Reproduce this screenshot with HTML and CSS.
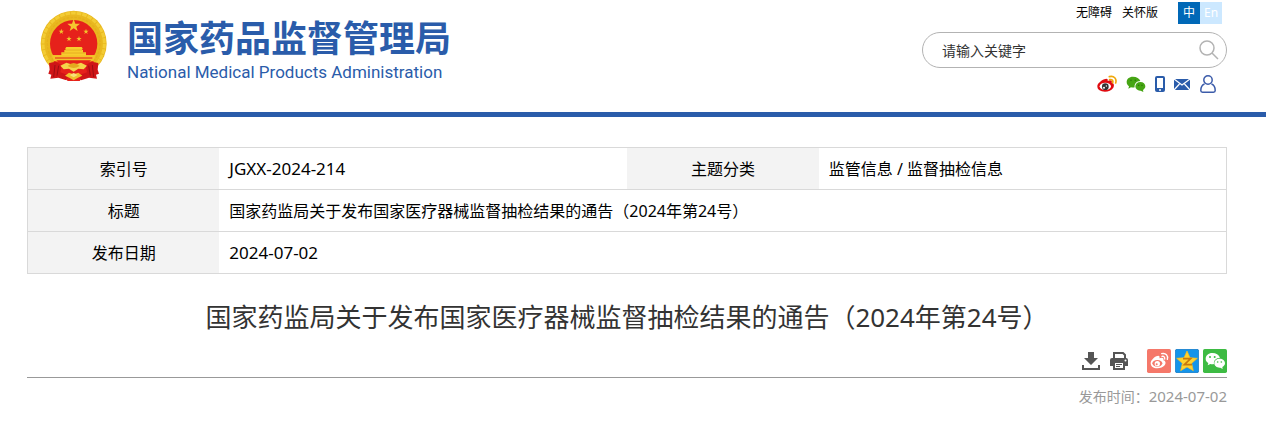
FILE: index.html
```html
<!DOCTYPE html>
<html lang="zh-CN">
<head>
	<meta charset="UTF-8">
	<meta name="viewport" content="width=device-width, initial-scale=1.0">
	<title>国家药监局关于发布国家医疗器械监督抽检结果的通告（2024年第24号）</title>
	<link rel="stylesheet" href="styles.css">
</head>
<body>
	<header class="header">
		<a class="logo" href="#">
			<svg class="emblem" viewBox="27 28 201 214" aria-hidden="true">
				<circle cx="128" cy="128" r="99" fill="#e9b81f"/>
				<circle cx="128" cy="128" r="92" fill="none" stroke="#f3cc35" stroke-width="9" stroke-dasharray="14 3"/>
				<circle cx="128" cy="128" r="79" fill="none" stroke="#e5b01c" stroke-width="4" stroke-dasharray="8 4"/>
				<circle cx="128" cy="128" r="71" fill="#e6211b"/>
				<path d="M128 54l5 14h14l-11 9 4 13-12-8-12 8 4-13-11-9h14z" fill="#f5c72e"/>
				<path id="star" d="M91 83l2 6h6l-5 4 2 6-5-4-5 4 2-6-5-4h6z" fill="#f2c52c"/>
				<use href="#star" x="74"/>
				<use href="#star" x="23" y="22"/>
				<use href="#star" x="53" y="22"/>
				<path d="M103 142l3-4h46l3 4-2 5h3v7h9v9h25l-6 16H72l-6-16h25v-9h9v-7h4z" fill="#f8cd2d"/>
				<path d="M103 147h50M93 156h71" stroke="#e0a01c" stroke-width="2"/>
				<path d="M62 163h132l-8 19H70z" fill="#f3c42a"/>
				<path d="M72 171h112" stroke="#e6211b" stroke-width="3"/>
				<path d="M76 178h104l-14 14H90z" fill="#e6211b"/>
				<path d="M68 180l24 4 36-4 36 4 24-4-8 28-22 18-12 14h-36l-12-14-22-18z" fill="#e6211b"/>
				<path d="M54 186l20-4 18 10-4 22 24 9-6 15-24-8-24 3 3-12-9-3 4-12zM202 186l-20-4-18 10 4 22-24 9 6 15 24-8 24 3-3-12 9-3-4-12z" fill="#cf1517"/>
				<path d="M72 192l-4 36M83 194l-5 30M184 192l4 36M173 194l5 30" stroke="#9c0e12" stroke-width="3"/>
				<path d="M88 194l18-9 22 7 22-7 18 9-10 11-16-2-14 9-14-9-16 2z" fill="#f5d44a"/>
				<path d="M110 195q18-18 36 0-18 12-36 0z" fill="#e4a91e"/>
				<path d="M102 224l12-9 14 5 14-5 12 9-13 6-13 8-13-8z" fill="#f0c22e"/>
				<path d="M116 222l12-6 12 6-12 7z" fill="#f9e27a"/>
			</svg>
			<span class="logo-text">
				<span class="logo-cn">国家药品监督管理局</span>
				<span class="logo-en">National Medical Products Administration</span>
			</span>
		</a>
		<div class="header-right">
			<nav class="top-links">
				<a href="#">无障碍</a>
				<a href="#">关怀版</a>
				<div class="lang">
					<a class="active" href="#">中</a>
					<a href="#">En</a>
				</div>
			</nav>
			<form class="search">
				<input type="text" placeholder="请输入关键字" aria-label="请输入关键字">
				<button type="submit" aria-label="搜索">
					<svg width="20" height="20" viewBox="0 0 20 20" fill="none" stroke="#b3b3b3" stroke-width="1.500">
						<circle cx="8" cy="8" r="7"/>
						<path d="M13 13l6 6"/>
					</svg>
				</button>
			</form>
			<div class="social">
				<a href="#" aria-label="微博">
					<svg width="20" height="18" viewBox="0 0 60 54">
						<path d="M22 13c7-4 12-1 10 5 8-4 15-2 12 5 8 2 8 9 5 15-5 8-15 12-25 12C11 50 1 45 1 34c0-7 10-17 21-21z" fill="#e00b10"/>
						<ellipse cx="25" cy="34" rx="17" ry="11" fill="#fff"/>
						<circle cx="25" cy="35" r="10" fill="#333"/>
						<circle cx="21" cy="38" r="3" fill="#fff"/>
						<circle cx="28" cy="33" r="2" fill="#fff"/>
						<path d="M37 5c14-4 23 6 19 19M38 14c7-2 11 3 9 9" fill="none" stroke="#f0a80c" stroke-width="5" stroke-linecap="round"/>
					</svg>
				</a>
				<a href="#" aria-label="微信">
					<svg width="20" height="18" viewBox="0 0 60 54">
						<path d="M21 5C9 5 2 12 2 21c0 6 3 10 7 13l-2 7 8-4c4 1 8 1 11 0-2-10 6-19 17-19C40 10 32 5 21 5z" fill="#46a514"/>
						<path d="M43 21c-9 0-15 6-15 13 0 8 7 14 16 13l8 4-1-6c4-3 7-6 7-11 0-7-6-13-15-13z" fill="#46a514"/>
						<g fill="#2c7a08"><circle cx="15" cy="16" r="2.500"/><circle cx="28" cy="16" r="2.500"/><circle cx="38" cy="31" r="2.500"/><circle cx="48" cy="31" r="2.500"/></g>
					</svg>
				</a>
				<a href="#" aria-label="手机">
					<svg width="10" height="18" viewBox="0 0 10 18">
						<rect width="10" height="16" y="1" rx="2" fill="#2a5caa"/>
						<path d="M2 3h6v10H2z" fill="#fff"/>
						<circle cx="5" cy="15" r="1" fill="#fff"/>
					</svg>
				</a>
				<a href="#" aria-label="邮箱">
					<svg width="16" height="18" viewBox="0 0 16 18">
						<path d="M0 4h16v11H0z" fill="#2a5caa"/>
						<path d="M0 4l8 6 8-6M0 15l5.500-6M16 15l-5.500-6" fill="none" stroke="#fff" stroke-width="1.200"/>
					</svg>
				</a>
				<a href="#" aria-label="个人中心">
					<svg width="18" height="18" viewBox="0 0 16 18" fill="none" stroke="#3c5caa" stroke-width="1.500">
						<circle cx="8" cy="5" r="4.200"/>
						<path d="M4.500 9C2 10 .8 12.500.8 15.500q0 1.700 1.700 1.700h11q1.700 0 1.700-1.700c0-3-1.200-5.500-3.700-6.500"/>
					</svg>
				</a>
			</div>
		</div>
	</header>

	<main class="content">
		<table class="info">
			<tr>
				<th scope="row">索引号</th>
				<td class="num">JGXX-2024-214</td>
				<th scope="row">主题分类</th>
				<td>监管信息 / 监督抽检信息</td>
			</tr>
			<tr>
				<th scope="row">标题</th>
				<td colspan="3">国家药监局关于发布国家医疗器械监督抽检结果的通告（2024年第24号）</td>
			</tr>
			<tr>
				<th scope="row">发布日期</th>
				<td class="num" colspan="3">2024-07-02</td>
			</tr>
		</table>

		<h1 class="title">国家药监局关于发布国家医疗器械监督抽检结果的通告（2024年第24号）</h1>

		<div class="tools">
			<button type="button" aria-label="下载">
				<svg width="20" height="20" viewBox="0 0 20 20" fill="#555">
					<path d="M7 1h6v6h4l-7 7-7-7h4z"/>
					<path d="M1 14h2v3h14v-3h2v5H1z"/>
				</svg>
			</button>
			<button type="button" aria-label="打印">
				<svg width="20" height="20" viewBox="0 0 20 20">
					<path d="M5 7V2h9l2 2v3" fill="none" stroke="#555" stroke-width="2"/>
					<path d="M3 7h14q2 0 2 2v6h-3v-3H4v3H1V9q0-2 2-2z" fill="#555"/>
					<path d="M5 11h10v7H5z" fill="#fff" stroke="#555" stroke-width="2"/>
					<path d="M7 13.500h6M7 15.500h4" stroke="#555"/>
					<circle cx="16.500" cy="9.500" r="1" fill="#fff"/>
				</svg>
			</button>
			<div class="share">
				<a href="#" aria-label="分享到微博">
					<svg width="24" height="24" viewBox="0 0 72 72">
						<rect width="72" height="72" rx="5" fill="#f5786a"/>
						<path d="M28 22c7-4 12-1 9 6 9-4 15-1 12 6 8 2 8 10 4 15-5 6-13 9-22 9-12 0-20-6-20-15 0-7 8-17 17-21z" fill="#fff"/>
						<ellipse cx="31" cy="43" rx="15" ry="10" fill="#f5786a"/>
						<circle cx="31" cy="44" r="8" fill="#fff"/>
						<circle cx="29" cy="46" r="3" fill="#f5786a"/>
						<path d="M44 14c13-3 20 6 17 17M45 22c6-1 9 3 8 8" fill="none" stroke="#fff" stroke-width="4" stroke-linecap="round"/>
					</svg>
				</a>
				<a href="#" aria-label="分享到QQ空间">
					<svg width="24" height="24" viewBox="0 0 72 72">
						<rect x="1" y="1" width="70" height="70" rx="5" fill="#1494ea" stroke="#0870bd" stroke-width="2"/>
						<path d="M36 6l9 20 22 2-17 15 5 22-19-11-19 11 5-22L5 28l22-2z" fill="#ffd22e" stroke="#ffbd1a" stroke-width="2"/>
						<path d="M24 29h23L28 47h23" fill="none" stroke="#c8780c" stroke-width="5"/>
					</svg>
				</a>
				<a href="#" aria-label="分享到微信">
					<svg width="24" height="24" viewBox="0 0 72 72">
						<rect width="72" height="72" rx="5" fill="#3dbb43"/>
						<path d="M28 12C16 12 8 20 8 29c0 6 3 10 8 13l-2 7 8-4c4 1 8 1 11 0-2-10 6-19 18-19-3-9-12-14-23-14z" fill="#fff"/>
						<path d="M50 29c-9 0-16 6-16 14s8 14 18 13l7 4-1-6c5-3 8-6 8-11 0-8-7-14-16-14z" fill="#fff"/>
						<g fill="#3dbb43"><circle cx="21" cy="24" r="3"/><circle cx="35" cy="24" r="3"/><circle cx="44" cy="39" r="2.500"/><circle cx="55" cy="39" r="2.500"/></g>
					</svg>
				</a>
			</div>
		</div>
		<p class="date">发布时间：<span>2024-07-02</span></p>
	</main>
</body>
</html>
```

FILE: styles.css
```css
* {
	box-sizing: border-box;
}
body {
	margin: 0;
	background-color: #fff;
	color: #000;
	font-family: "Noto Sans", "Noto Sans CJK SC", sans-serif;
	font-size: 16px;
}
a {
	color: inherit;
	text-decoration: none;
}
button {
	padding: 0;
	border: 0;
	background: none;
	cursor: pointer;
}
svg {
	display: block;
}

/* header */
.header {
	display: flex;
	justify-content: space-between;
	align-items: flex-start;
	padding: 2px 39px 19px 40px;
	border-bottom: 5px solid #2a5caa;
}
.logo {
	display: flex;
	gap: 20px;
	padding-top: 8px;
	color: #2a5caa;
}
.emblem {
	width: 67px;
	height: 72px;
}
.logo-text {
	display: flex;
	flex-direction: column;
	padding-top: 6px;
}
.logo-cn {
	font-family: "Noto Sans CJK SC", sans-serif;
	font-size: 36px;
	font-weight: bold;
	line-height: 40px;
}
.logo-en {
	font-family: Roboto, sans-serif;
	font-size: 17px;
	line-height: 32px;
}
.header-right {
	width: 305px;
}
.top-links {
	display: flex;
	justify-content: flex-end;
	gap: 10px;
	padding-right: 5px;
	font-size: 12px;
	line-height: 22px;
}
.lang {
	display: flex;
	margin-left: 10px;
}
.lang a {
	width: 22px;
	background-color: #cce8ff;
	color: #fff;
	text-align: center;
}
.lang .active {
	background-color: #0068b7;
}
.search {
	display: flex;
	align-items: center;
	height: 36px;
	margin-top: 8px;
	padding: 0 7px 0 19px;
	border: 1px solid #b3b3b3;
	border-radius: 18px;
}
.search input {
	flex: 1;
	min-width: 0;
	padding: 0;
	border: 0;
	outline: 0;
	background: none;
	font-family: inherit;
	font-size: 14px;
}
.search input::placeholder {
	color: #333;
}
.social {
	display: flex;
	justify-content: flex-end;
	gap: 9px;
	margin-top: 7px;
	padding-right: 10px;
}

/* content */
.content {
	padding: 30px 39px 20px 27px;
}
.info {
	width: 100%;
	border: 1px solid #d9d9d9;
	border-collapse: collapse;
	table-layout: fixed;
}
.info th,
.info td {
	height: 42px;
	padding: 0 10px;
	border-bottom: 1px solid #d9d9d9;
	line-height: 24px;
}
.info th {
	width: 16%;
	background-color: #f3f3f3;
	font-weight: normal;
}
.info .num {
	font-size: 17px;
}
.title {
	margin: 25px 0 0;
	color: #333;
	font-size: 26px;
	font-weight: normal;
	line-height: 36px;
	text-align: center;
}
.tools {
	display: flex;
	justify-content: flex-end;
	align-items: center;
	gap: 8px;
	margin-top: 14px;
	padding-bottom: 4px;
	border-bottom: 1px solid #999;
}
.share {
	display: flex;
	gap: 4px;
	margin-left: 10px;
}
.date {
	margin: 7px 0 0;
	color: #999;
	font-size: 14px;
	line-height: 22px;
	text-align: right;
}
.date span {
	font-size: 15px;
}
```
